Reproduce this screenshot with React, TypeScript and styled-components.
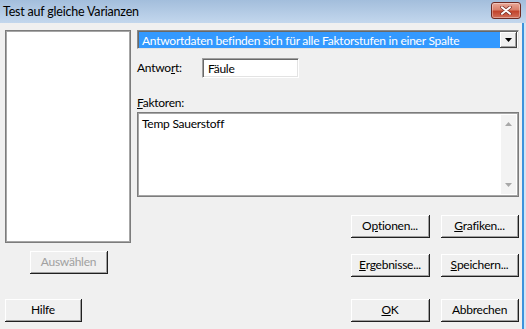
import styled, { createGlobalStyle } from 'styled-components';

const GlobalStyle = createGlobalStyle`
  html, body {
    margin: 0;
    padding: 0;
    background: #f0f0f0;
  }
`;

const Window = styled.div`
  width: 526px;
  height: 329px;
  display: flex;
  flex-direction: column;
  background: #d3e3f4;
  font-family: Lato, "Noto Sans", sans-serif;
  font-size: 12px;
  letter-spacing: -0.25px;
  color: #000;
  overflow: hidden;
`;

const TitleBar = styled.div`
  height: 23px;
  flex: none;
  display: flex;
  align-items: center;
  justify-content: space-between;
  padding: 0 5px 0 3px;
  background: linear-gradient(#a3bedc, #c3d7ed);
`;

const Title = styled.span`
  font-size: 12.5px;
  letter-spacing: -0.2px;
  color: #000;
  margin-top: -1px;
`;

const CloseBtn = styled.div`
  width: 28px;
  height: 15px;
  border: 1px solid #6e2a22;
  border-radius: 3px;
  background: linear-gradient(#e9a898 0%, #d9806b 45%, #c2432b 55%, #d2705a 100%);
  box-shadow: inset 0 0 0 1px rgba(255, 255, 255, 0.35);
  display: flex;
  align-items: center;
  justify-content: center;
  margin-top: -2px;
`;

const Body = styled.div`
  flex: 1;
  background: #f0f0f0;
  margin-right: 2px;
  border-right: 2px solid #3c93dc;
  padding: 7px 3px 7px 5px;
  display: grid;
  grid-template-columns: 126px 1fr;
  grid-template-rows: 1fr auto;
  column-gap: 6px;
`;

const LeftPane = styled.div`
  display: flex;
  flex-direction: column;
  align-items: center;
`;

const Sunken = styled.div`
  background: #fff;
  border: 1px solid #7c7c7c;
  box-shadow: inset 0 0 0 1px #a6a6a6;
  box-sizing: border-box;
`;

const VarList = styled(Sunken)`
  width: 126px;
  height: 213px;
`;

const Button = styled.div<{ $disabled?: boolean; $w?: number }>`
  width: ${p => p.$w ?? 79}px;
  height: 23px;
  box-sizing: border-box;
  background: #f0f0f0;
  border-right: 1px solid #202020;
  border-bottom: 1px solid #202020;
  box-shadow: inset 1px 1px #fff, inset -1px -1px #a0a0a0;
  display: flex;
  align-items: center;
  justify-content: center;
  color: ${p => (p.$disabled ? '#a0a0a0' : '#000')};
  padding-bottom: 1px;
`;

const SelectBtn = styled(Button)`
  margin-top: 8px;
  margin-left: 2px;
`;

const RightPane = styled.div`
  display: flex;
  flex-direction: column;
`;

const Combo = styled.div`
  height: 19px;
  box-sizing: border-box;
  display: flex;
  align-items: stretch;
  border: 1px solid #8a8a8a;
  border-right-color: #e3e3e3;
  border-bottom-color: #e3e3e3;
  box-shadow: inset 1px 1px #696969;
  padding: 1px 1px 0 1px;
  background: #fff;
`;

const ComboValue = styled.div`
  flex: 1;
  background: #3399ff;
  color: #fff;
  padding-left: 3px;
  display: flex;
  align-items: center;
  white-space: nowrap;
`;

const ComboArrow = styled.div`
  width: 17px;
  background: #f0f0f0;
  box-sizing: border-box;
  border-right: 1px solid #404040;
  border-bottom: 1px solid #404040;
  box-shadow: inset 1px 1px #fff, inset -1px -1px #a0a0a0;
  display: flex;
  align-items: center;
  justify-content: center;
`;

const FieldRow = styled.div`
  display: flex;
  align-items: center;
  margin-top: 9px;
`;

const Label = styled.span<{ $w?: number }>`
  width: ${p => (p.$w ? `${p.$w}px` : 'auto')};
  line-height: 14px;
`;

const TextBox = styled.div`
  width: 97px;
  height: 20px;
  box-sizing: border-box;
  background: #fff;
  border: 1px solid #a0a0a0;
  border-right-color: #fff;
  border-bottom-color: #fff;
  box-shadow: inset 1px 1px #696969, inset -1px -1px #e3e3e3;
  padding-left: 5px;
  display: flex;
  align-items: center;
`;

const GroupLabel = styled(Label)`
  margin-top: 18px;
  margin-bottom: 2px;
`;

const FactorBox = styled(Sunken)`
  height: 85px;
  display: flex;
`;

const FactorText = styled.div`
  flex: 1;
  padding: 3px 0 0 4px;
`;

const ScrollTrack = styled.div`
  width: 15px;
  margin: 2px 2px 2px 0;
  background: #f3f3f3;
  display: flex;
  flex-direction: column;
  justify-content: space-between;
  align-items: center;
  padding: 7px 0;
`;

const ButtonGrid = styled.div`
  display: grid;
  grid-template-columns: 79px 78px;
  column-gap: 11px;
  row-gap: 16px;
  justify-content: end;
  margin-top: 18px;
`;

const Footer = styled.div`
  display: flex;
  align-items: flex-end;
`;

const FooterRight = styled(ButtonGrid)`
  margin-top: 0;
  align-self: end;
`;

const U = styled.span`
  text-decoration: underline;
`;

function Triangle({ down, color }: { down?: boolean; color: string }) {
  return (
    <svg width="7" height="4" viewBox="0 0 7 4">
      <path d={down ? 'M0 0h7L3.5 4z' : 'M0 4h7L3.5 0z'} fill={color} />
    </svg>
  );
}

export default function App() {
  return (
    <>
      <GlobalStyle />
      <Window>
        <TitleBar>
          <Title>Test auf gleiche Varianzen</Title>
          <CloseBtn>
            <svg width="12" height="9" viewBox="0 0 12 9">
              <path d="M2 1.2l8 6.6M10 1.2l-8 6.6" stroke="#7a2e26" strokeWidth="3.4" strokeLinecap="round" />
              <path d="M2 1.2l8 6.6M10 1.2l-8 6.6" stroke="#fff" strokeWidth="2" strokeLinecap="round" />
            </svg>
          </CloseBtn>
        </TitleBar>
        <Body>
          <LeftPane>
            <VarList />
            <SelectBtn $disabled $w={78}>Auswählen</SelectBtn>
          </LeftPane>
          <RightPane>
            <Combo>
              <ComboValue>Antwortdaten befinden sich für alle Faktorstufen in einer Spalte</ComboValue>
              <ComboArrow>
                <Triangle down color="#000" />
              </ComboArrow>
            </Combo>
            <FieldRow>
              <Label $w={65}>
                Antwo<U>r</U>t:
              </Label>
              <TextBox>Fäule</TextBox>
            </FieldRow>
            <GroupLabel>
              <U>F</U>aktoren:
            </GroupLabel>
            <FactorBox>
              <FactorText>Temp Sauerstoff</FactorText>
              <ScrollTrack>
                <Triangle color="#a8a8a8" />
                <Triangle down color="#a8a8a8" />
              </ScrollTrack>
            </FactorBox>
            <ButtonGrid>
              <Button>
                O<U>p</U>tionen...
              </Button>
              <Button $w={78}>
                <U>G</U>rafiken...
              </Button>
              <Button>
                <U>E</U>rgebnisse...
              </Button>
              <Button $w={78}>
                <U>S</U>peichern...
              </Button>
            </ButtonGrid>
          </RightPane>
          <Footer>
            <Button $w={77}>Hilfe</Button>
          </Footer>
          <FooterRight>
            <Button>
              <U>O</U>K
            </Button>
            <Button $w={78}>Abbrechen</Button>
          </FooterRight>
        </Body>
      </Window>
    </>
  );
}
